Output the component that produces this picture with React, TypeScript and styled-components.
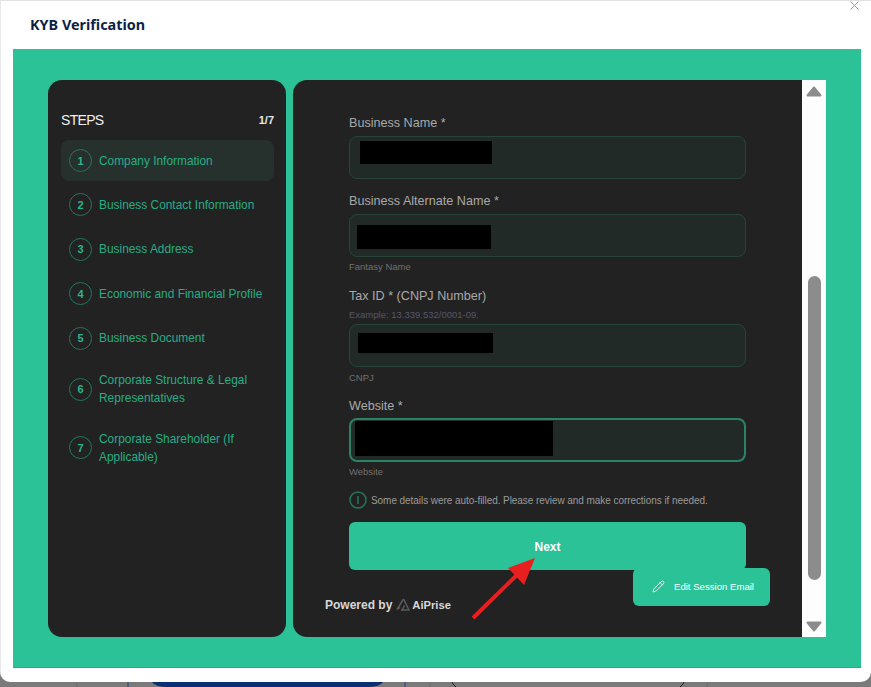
import { createGlobalStyle, styled } from "styled-components";
import { LuPencil } from "react-icons/lu";

const teal = "#2bc297";

const GlobalStyle = createGlobalStyle`
  html, body {
    margin: 0;
    padding: 0;
    height: 100%;
    overflow: hidden;
    background: #7a7a7a;
    font-family: "Liberation Sans", Arial, sans-serif;
  }
`;

const Page = styled.div`
  position: relative;
  width: 871px;
  height: 687px;
  overflow: hidden;
  display: flex;
  flex-direction: column;
`;

const Modal = styled.div`
  position: relative;
  flex: none;
  height: 682px;
  box-sizing: border-box;
  background: #fff;
  border-top: 1px solid #e2e2e2;
  border-left: 1px solid #e8e8e8;
  border-radius: 0 0 10px 10px;
  display: flex;
  flex-direction: column;
  z-index: 1;
`;

const Behind = styled.svg`
  display: block;
  flex: none;
  width: 871px;
  height: 5px;
`;

const Header = styled.header`
  flex: none;
  height: 48px;
  box-sizing: border-box;
  padding: 15px 0 0 29px;
  font-family: "Noto Sans", sans-serif;
  font-size: 14.4px;
  line-height: 18px;
  font-weight: 700;
  color: #0c1f45;
`;

const Close = styled.svg`
  position: absolute;
  top: 0;
  right: 12px;
  width: 9px;
  height: 9px;
  stroke: #9a9a9a;
  stroke-width: 1;
`;

const Body = styled.main`
  flex: none;
  width: 848px;
  height: 619px;
  margin-left: 12px;
  box-sizing: border-box;
  padding: 31px 35px;
  background: ${teal};
  border-bottom: 1px solid #27ad87;
  display: flex;
  gap: 7px;
`;

const Sidebar = styled.aside`
  flex: none;
  width: 238px;
  height: 557px;
  box-sizing: border-box;
  padding: 30px 12px 0 13px;
  background: #222222;
  border-radius: 14px;
`;

const StepsHead = styled.div`
  display: flex;
  align-items: center;
  justify-content: space-between;
  height: 20px;
  margin-bottom: 10px;
`;

const StepsTitle = styled.span`
  font-size: 14px;
  color: #eeeeee;
  letter-spacing: -0.7px;
`;

const StepsCount = styled.span`
  font-size: 11px;
  font-weight: 700;
  color: #e8e8e8;
`;

const StepList = styled.ol`
  list-style: none;
  margin: 0;
  padding: 0;
  display: flex;
  flex-direction: column;
  gap: 3.4px;
`;

const StepRow = styled.li<{ $active?: boolean }>`
  min-height: 41px;
  box-sizing: border-box;
  padding: 9.5px 8px;
  display: flex;
  align-items: center;
  gap: 7px;
  border-radius: 8px;
  background: ${(p) => (p.$active ? "#26312d" : "transparent")};
`;

const StepBadge = styled.span`
  flex: none;
  width: 23px;
  height: 23px;
  margin: -2px 0;
  box-sizing: border-box;
  border: 1.5px solid #24775f;
  border-radius: 50%;
  display: flex;
  align-items: center;
  justify-content: center;
  font-size: 11px;
  font-weight: 700;
  color: #2bb58d;
`;

const StepName = styled.span`
  font-size: 11.9px;
  line-height: 18px;
  color: #27ad86;
`;

const Content = styled.section`
  position: relative;
  flex: none;
  width: 533px;
  height: 557px;
  background: #222222;
  border-radius: 14px 0 0 14px;
  display: flex;
`;

const Scroller = styled.div`
  flex: 1;
  box-sizing: border-box;
  padding: 34px 0 0 56px;
  display: flex;
  flex-direction: column;
`;

const Form = styled.form`
  width: 397px;
  display: flex;
  flex-direction: column;
`;

const Label = styled.label`
  display: block;
  font-size: 12.6px;
  line-height: 18px;
  color: #a9a9a9;
`;

const Example = styled.div`
  font-size: 9.5px;
  line-height: 12px;
  color: #55566a;
  margin-top: 4px;
`;

const Field = styled.div<{
  $focused?: boolean;
  $inset: number;
  $offset: number;
  $gap: number;
}>`
  height: ${(p) => (p.$focused ? 44 : 43)}px;
  box-sizing: border-box;
  margin-top: ${(p) => p.$gap}px;
  padding: ${(p) => p.$offset}px 0 0 ${(p) => p.$inset}px;
  background: #222a27;
  border: ${(p) => (p.$focused ? "2px solid #2c8269" : "1.5px solid #27443a")};
  border-radius: 8px;
`;

const Redacted = styled.div<{ $w: number; $h: number }>`
  width: ${(p) => p.$w}px;
  height: ${(p) => p.$h}px;
  background: #000;
`;

const Helper = styled.div<{ $gap?: number }>`
  font-size: 9.5px;
  line-height: 12px;
  color: #707070;
  margin-top: ${(p) => p.$gap ?? 4}px;
`;

const Group = styled.div<{ $top: number }>`
  margin-top: ${(p) => p.$top}px;
`;

const Notice = styled.div`
  display: flex;
  align-items: center;
  gap: 4px;
  margin-top: 13px;
  font-size: 10px;
  letter-spacing: -0.06px;
  color: #9a9a9a;
`;

const NoticeIcon = styled.svg`
  flex: none;
  width: 18px;
  height: 18px;
`;

const NextButton = styled.button`
  width: 397px;
  height: 48px;
  margin-top: 13px;
  border: 0;
  padding: 2px 0 0;
  border-radius: 6px;
  background: ${teal};
  color: #ffffff;
  font-family: inherit;
  font-size: 12px;
  font-weight: 700;
`;

const PoweredBy = styled.div`
  display: flex;
  align-items: center;
  gap: 3px;
  margin: 27px 0 0 -24px;
  font-size: 12px;
  font-weight: 700;
  color: #d8d8d8;
`;

const Brand = styled.span`
  margin-left: -2px;
  font-size: 11.2px;
`;

const EditButton = styled.button`
  position: absolute;
  left: 340px;
  top: 488px;
  width: 137px;
  height: 38px;
  border: 0;
  padding: 0 0 2px 19px;
  border-radius: 6px;
  background: ${teal};
  color: #ffffff;
  font-family: inherit;
  font-size: 9.6px;
  display: flex;
  align-items: center;
  gap: 9px;
`;

const Scrollbar = styled.div`
  flex: none;
  width: 24px;
  background: #fdfdfd;
  display: flex;
  flex-direction: column;
  align-items: center;
  padding: 6px 0 5px;
  box-sizing: border-box;
`;

const Arrow = styled.svg<{ $down?: boolean }>`
  flex: none;
  width: 16px;
  height: 11px;
  fill: #8c8c8c;
  stroke: #8c8c8c;
  stroke-width: 2;
  stroke-linejoin: round;
  ${(p) => (p.$down ? "margin-top: auto; transform: scaleY(-1);" : "")}
`;

const Thumb = styled.div`
  width: 13px;
  height: 304px;
  margin-top: 179px;
  border-radius: 7px;
  background: #8c8c8c;
`;

const RedArrow = styled.svg`
  position: absolute;
  left: 465px;
  top: 550px;
  width: 80px;
  height: 76px;
  z-index: 2;
`;

const steps = [
  "Company Information",
  "Business Contact Information",
  "Business Address",
  "Economic and Financial Profile",
  "Business Document",
  "Corporate Structure & Legal Representatives",
  "Corporate Shareholder (If Applicable)",
];

const Logo = () => (
  <svg width="16" height="16" viewBox="0 0 16 16" fill="none" stroke="#5a5a5a" strokeWidth="1.5">
    <path d="M8.5 2 L14 13 H6" />
    <path d="M8.5 2 L2 12.5 L5 10.5" />
    <path d="M9.5 8.5 L7 13.5" />
  </svg>
);

const ScrollArrow = ({ down }: { down?: boolean }) => (
  <Arrow $down={down} viewBox="0 0 16 11">
    <path d="M8 1.5 L14.5 9.5 H1.5 Z" />
  </Arrow>
);

export default function App() {
  return (
    <Page>
      <GlobalStyle />
      <Modal>
        <Header>KYB Verification</Header>
        <Close viewBox="0 0 9 9">
          <path d="M0.5 0.5 L8.5 8.5 M8.5 0.5 L0.5 8.5" />
        </Close>
        <Body>
          <Sidebar>
            <StepsHead>
              <StepsTitle>STEPS</StepsTitle>
              <StepsCount>1/7</StepsCount>
            </StepsHead>
            <StepList>
              {steps.map((name, i) => (
                <StepRow key={name} $active={i === 0}>
                  <StepBadge>{i + 1}</StepBadge>
                  <StepName>{name}</StepName>
                </StepRow>
              ))}
            </StepList>
          </Sidebar>
          <Content>
            <Scroller>
              <Form>
                <Group $top={0}>
                  <Label>Business Name *</Label>
                  <Field $inset={10} $offset={3.5} $gap={4}>
                    <Redacted $w={132} $h={23} />
                  </Field>
                </Group>
                <Group $top={13}>
                  <Label>Business Alternate Name *</Label>
                  <Field $inset={7} $offset={9.5} $gap={4}>
                    <Redacted $w={134} $h={24} />
                  </Field>
                  <Helper>Fantasy Name</Helper>
                </Group>
                <Group $top={14}>
                  <Label>Tax ID * (CNPJ Number)</Label>
                  <Example>Example: 13.339.532/0001-09.</Example>
                  <Field $inset={8} $offset={7.5} $gap={3}>
                    <Redacted $w={135} $h={20} />
                  </Field>
                  <Helper $gap={5}>CNPJ</Helper>
                </Group>
                <Group $top={13}>
                  <Label>Website *</Label>
                  <Field $focused $inset={4} $offset={1} $gap={3}>
                    <Redacted $w={198} $h={35} />
                  </Field>
                  <Helper>Website</Helper>
                </Group>
                <Notice>
                  <NoticeIcon viewBox="0 0 18 18" fill="none" stroke="#24775f">
                    <circle cx="9" cy="9" r="8" strokeWidth="1.5" />
                    <path d="M9 5 V13" strokeWidth="1.5" />
                  </NoticeIcon>
                  Some details were auto-filled. Please review and make corrections if needed.
                </Notice>
                <NextButton type="button">Next</NextButton>
                <PoweredBy>
                  Powered by <Logo /> <Brand>AiPrise</Brand>
                </PoweredBy>
              </Form>
            </Scroller>
            <Scrollbar>
              <ScrollArrow />
              <Thumb />
              <ScrollArrow down />
            </Scrollbar>
            <EditButton type="button">
              <LuPencil size={13} strokeWidth={1.5} />
              Edit Session Email
            </EditButton>
          </Content>
        </Body>
      </Modal>
      <Behind viewBox="0 0 871 5">
        <path d="M152 0 Q155 5 168 5 H367 Q380 5 383 0 Z" fill="#0a2f73" />
        <path d="M452 0 Q453 3 456 5 M684 0 Q683 3 680 5" stroke="#1c1c1c" fill="none" />
        <path d="M77 0 V5 M430 0 V5 M707 0 V5" stroke="#6c6c6c" />
        <path d="M128 0 V5 M405 0 V5" stroke="#1f4484" />
      </Behind>
      <RedArrow viewBox="0 0 80 76">
        <path d="M8 68 L56 21" stroke="#e81f1f" strokeWidth="4" />
        <path d="M70 8 L43 18 L59 35 Z" fill="#e81f1f" />
      </RedArrow>
    </Page>
  );
}
